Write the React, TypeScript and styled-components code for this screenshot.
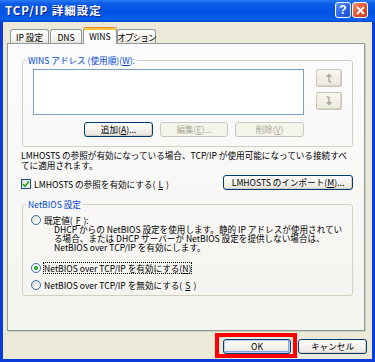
import styled, { createGlobalStyle } from "styled-components";

const GlobalStyle = createGlobalStyle`
  html, body {
    margin: 0;
    padding: 0;
  }
  body {
    font-family: "Noto Sans CJK JP", "Noto Sans", sans-serif;
    font-size: 8.6px;
    color: #000;
  }
`;

export default function App() {
    return (
        <>
            <GlobalStyle />
            <Frame>
                <TitleBar>
                    <Title>TCP/IP 詳細設定</Title>
                    <TitleButton $kind="help">?</TitleButton>
                    <TitleButton $kind="close">
                        <svg width="9" height="9" viewBox="0 0 9 9">
                            <path d="M1 1 L8 8 M8 1 L1 8" stroke="#fff" strokeWidth="1.8" />
                        </svg>
                    </TitleButton>
                </TitleBar>
                <Body>
                    <TabStrip>
                        <Tab $w={39}>IP 設定</Tab>
                        <Tab $w={32}>DNS</Tab>
                        <Tab $w={34} $active>
                            WINS
                        </Tab>
                        <Tab $w={39} $ls={-0.9}>
                            オプション
                        </Tab>
                    </TabStrip>
                    <Panel>
                        <WinsGroup>
                            <Legend>
                                WINS アドレス (使用順)(<u>W</u>):
                            </Legend>
                            <GroupBody $pad="4px 0 9px 10px">
                                <ListRow>
                                    <ListBox />
                                    <ArrowCol>
                                        <ArrowButton disabled>
                                            <svg width="8" height="10" viewBox="0 0 8 10">
                                                <path d="M4 0.5 L0.8 4 H7.2 Z" fill="#aca899" />
                                                <path d="M4 4 V8 Q4 9.2 6.5 9.2" stroke="#aca899" strokeWidth="1.4" fill="none" />
                                            </svg>
                                        </ArrowButton>
                                        <ArrowButton disabled>
                                            <svg width="8" height="10" viewBox="0 0 8 10">
                                                <path d="M1.5 0.8 Q4 0.8 4 2 V6" stroke="#aca899" strokeWidth="1.4" fill="none" />
                                                <path d="M0.8 6 H7.2 L4 9.5 Z" fill="#aca899" />
                                            </svg>
                                        </ArrowButton>
                                    </ArrowCol>
                                </ListRow>
                                <ButtonRow>
                                    <Button $w={69}>
                                        追加(<u>A</u>)...
                                    </Button>
                                    <Button $w={68} disabled>
                                        編集(<u>E</u>)...
                                    </Button>
                                    <Button $w={69} disabled>
                                        削除(<u>V</u>)
                                    </Button>
                                </ButtonRow>
                            </GroupBody>
                        </WinsGroup>

                        <InfoText>
                            LMHOSTS の参照が有効になっている場合、TCP/IP が使用可能になっている接続すべ
                            <br />
                            てに適用されます。
                        </InfoText>

                        <CheckRow>
                            <CheckLabel>
                                <CheckBox>
                                    <svg width="8" height="8" viewBox="0 0 8 8">
                                        <path d="M1 4 L3 6.2 L7 1.5" stroke="#21a121" strokeWidth="1.7" fill="none" />
                                    </svg>
                                </CheckBox>
                                LMHOSTS の参照を有効にする(<u>L</u>)
                            </CheckLabel>
                            <Button $w={130}>
                                LMHOSTS のインポート(<u>M</u>)...
                            </Button>
                        </CheckRow>

                        <NetbiosGroup>
                            <Legend>NetBIOS 設定</Legend>
                            <GroupBody $pad="5px 0 5px 8px">
                                <RadioRow>
                                    <Radio />
                                    既定値(<u>F</u>):
                                </RadioRow>
                                <Desc>
                                    DHCP からの NetBIOS 設定を使用します。静的 IP アドレスが使用されてい
                                    <br />
                                    る場合、または DHCP サーバーが NetBIOS 設定を提供しない場合は、
                                    <br />
                                    NetBIOS over TCP/IP を有効にします。
                                </Desc>
                                <RadioRow $gap={10}>
                                    <Radio $checked />
                                    <Focus>
                                        NetBIOS over TCP/IP を有効にする(<u>N</u>)
                                    </Focus>
                                </RadioRow>
                                <RadioRow $gap={6}>
                                    <Radio />
                                    NetBIOS over TCP/IP を無効にする(<u>S</u>)
                                </RadioRow>
                            </GroupBody>
                        </NetbiosGroup>
                    </Panel>

                    <BottomBar>
                        <Highlight>
                            <Button $w={68} $default>
                                OK
                            </Button>
                        </Highlight>
                        <CancelWrap>
                            <Button $w={69}>キャンセル</Button>
                        </CancelWrap>
                    </BottomBar>
                </Body>
            </Frame>
        </>
    );
}

const Frame = styled.div`
    width: 375px;
    height: 362px;
    box-sizing: border-box;
    display: flex;
    flex-direction: column;
    background: #0b3bd8;
    overflow: hidden;
`;

const TitleBar = styled.div`
    height: 22px;
    flex: none;
    display: flex;
    align-items: center;
    gap: 1px;
    padding: 0 7px 2px 5px;
    box-sizing: border-box;
    background: linear-gradient(
        180deg,
        #2a7af6 0%,
        #0a5be8 18%,
        #0053e2 60%,
        #0a5fee 88%,
        #0047cf 100%
    );
`;

const Title = styled.div`
    flex: 1;
    color: #fff;
    font-weight: bold;
    font-size: 11.5px;
    letter-spacing: 1px;
    text-shadow: 1px 1px 0 #0a1e8c;
`;

const TitleButton = styled.div<{ $kind: "help" | "close" }>`
    width: 16px;
    height: 16px;
    box-sizing: border-box;
    border: 1px solid #fff;
    border-radius: 3px;
    display: flex;
    align-items: center;
    justify-content: center;
    color: #fff;
    font-family: "Liberation Sans", sans-serif;
    font-weight: bold;
    font-size: 12px;
    background: ${(p) =>
        p.$kind === "help"
            ? "linear-gradient(135deg, #5d93fa 0%, #2a63e8 55%, #1a4fd6 100%)"
            : "linear-gradient(135deg, #f09878 0%, #e3552f 50%, #c73c1c 100%)"};
`;

const Body = styled.div`
    flex: 1;
    margin: 0 3px 3px;
    background: #ece9d8;
    display: flex;
    flex-direction: column;
    padding: 5px 7px 0 4px;
`;

const TabStrip = styled.div`
    display: flex;
    align-items: flex-end;
    height: 17px;
    padding-left: 3px;
    position: relative;
    z-index: 1;
`;

const Tab = styled.div<{ $w: number; $active?: boolean; $ls?: number }>`
    width: ${(p) => p.$w}px;
    height: ${(p) => (p.$active ? 17 : 14)}px;
    margin: 0 ${(p) => (p.$active ? 0 : 1)}px ${(p) => (p.$active ? 0 : 1)}px 0;
    box-sizing: border-box;
    border: 1px solid #919b9c;
    border-bottom: none;
    border-top-color: ${(p) => (p.$active ? "#e68b2c" : "#919b9c")};
    border-radius: 3px 3px 0 0;
    background: ${(p) =>
        p.$active
            ? "#fcfcfe"
            : "linear-gradient(180deg, #ffffff 0%, #f3f2ec 70%, #e6e4d9 100%)"};
    box-shadow: ${(p) => (p.$active ? "inset 0 2px 0 #ffc83c" : "none")};
    display: flex;
    justify-content: center;
    align-items: center;
    padding-top: ${(p) => (p.$active ? 0 : 1)}px;
    letter-spacing: ${(p) => p.$ls ?? 0}px;
    white-space: nowrap;
`;

const Panel = styled.div`
    margin-top: -1px;
    height: 288px;
    box-sizing: border-box;
    border: 1px solid #919b9c;
    box-shadow: 1px 1px 0 #d0cebf;
    background: linear-gradient(180deg, #fcfcfe 0%, #f4f3ee 100%);
    padding: 0 11px 0 14px;
    display: flex;
    flex-direction: column;
`;

const Group = styled.fieldset`
    margin: 0;
    padding: 0;
    min-width: 0;
    border: 1px solid #d0d0bf;
    border-radius: 3px;
`;

const WinsGroup = styled(Group)`
    margin-top: 11px;
`;

const NetbiosGroup = styled(Group)`
    margin-top: 9px;
`;

const GroupBody = styled.div<{ $pad: string }>`
    padding: ${(p) => p.$pad};
`;

const Legend = styled.legend`
    color: #0046d5;
    padding: 0 2px;
    margin-left: 3px;
    line-height: 10px;
    white-space: nowrap;
`;

const ListRow = styled.div`
    display: flex;
    align-items: flex-start;
`;

const ListBox = styled.div`
    width: 271px;
    height: 46px;
    box-sizing: border-box;
    border: 1px solid #7f9db9;
    background: #fff;
`;

const ArrowCol = styled.div`
    margin-left: 12px;
    display: flex;
    flex-direction: column;
    gap: 5px;
`;

const ArrowButton = styled.button`
    width: 26px;
    height: 18px;
    padding: 0;
    box-sizing: border-box;
    border: 1px solid #c9c7ba;
    border-radius: 2px;
    background: linear-gradient(180deg, #f6f5ef 0%, #ebe9df 100%);
    box-shadow: inset -1px -1px 0 #d8d5c8;
    display: flex;
    align-items: center;
    justify-content: center;
`;

const ButtonRow = styled.div`
    width: 271px;
    margin-top: 7px;
    display: flex;
    justify-content: flex-end;
    gap: 7px;
`;

const Button = styled.button<{ $w: number; $default?: boolean }>`
    width: ${(p) => p.$w}px;
    height: 15px;
    padding: 0;
    box-sizing: border-box;
    font-family: inherit;
    font-size: 8.6px;
    line-height: 13px;
    color: #000;
    white-space: nowrap;
    border: 1px solid #003c74;
    border-radius: 3px;
    background: linear-gradient(180deg, #ffffff 0%, #f4f3ee 45%, #ecebe6 85%, #d6d0c5 100%);
    box-shadow: ${(p) =>
        p.$default
            ? "inset 0 0 0 1px #b5ccf5, inset -1px -1px 0 1px #7ea3e8"
            : "inset -1px -1px 0 #d6d0c5"};

    &:disabled {
        color: #aca899;
        border-color: #c9c7ba;
        background: #f5f4ea;
        box-shadow: none;
    }
`;

const InfoText = styled.div`
    margin: 4px 0 0 -1px;
    line-height: 9.5px;
    white-space: nowrap;
`;

const CheckRow = styled.div`
    margin-top: 5px;
    height: 15px;
    display: flex;
    align-items: center;
    justify-content: space-between;
`;

const CheckLabel = styled.div`
    margin-left: -1px;
    padding-top: 2px;
    display: flex;
    align-items: center;
    gap: 3px;
    white-space: nowrap;
`;

const CheckBox = styled.div`
    width: 10px;
    height: 10px;
    box-sizing: border-box;
    border: 1px solid #1c5180;
    background: linear-gradient(135deg, #dcdcd7 0%, #ffffff 100%);
    display: flex;
    align-items: center;
    justify-content: center;
`;

const RadioRow = styled.div<{ $gap?: number }>`
    margin-top: ${(p) => p.$gap ?? 0}px;
    height: 11px;
    display: flex;
    align-items: center;
    gap: 3px;
    white-space: nowrap;
`;

const Radio = styled.div<{ $checked?: boolean }>`
    width: 10px;
    height: 10px;
    flex: none;
    box-sizing: border-box;
    border: 1px solid #3a6ea5;
    border-radius: 50%;
    background: ${(p) =>
        p.$checked
            ? "radial-gradient(circle, #5fd35f 0, #21a121 1.8px, #ffffff 2.4px, #f0f0ea 100%)"
            : "linear-gradient(135deg, #dcdcd7 0%, #ffffff 100%)"};
`;

const Focus = styled.span`
    outline: 1px dotted #000;
    outline-offset: 0;
    line-height: 10px;
`;

const Desc = styled.div`
    padding-left: 23px;
    line-height: 9px;
    white-space: nowrap;
`;

const BottomBar = styled.div`
    margin: 2px -2px 0 0;
    display: flex;
    justify-content: flex-end;
    align-items: flex-start;
    gap: 1px;
`;

const Highlight = styled.div`
    border: 4px solid #ff0000;
    padding: 2px 2px 0 4px;
    display: flex;
`;

const CancelWrap = styled.div`
    padding-top: 6px;
    display: flex;
`;
